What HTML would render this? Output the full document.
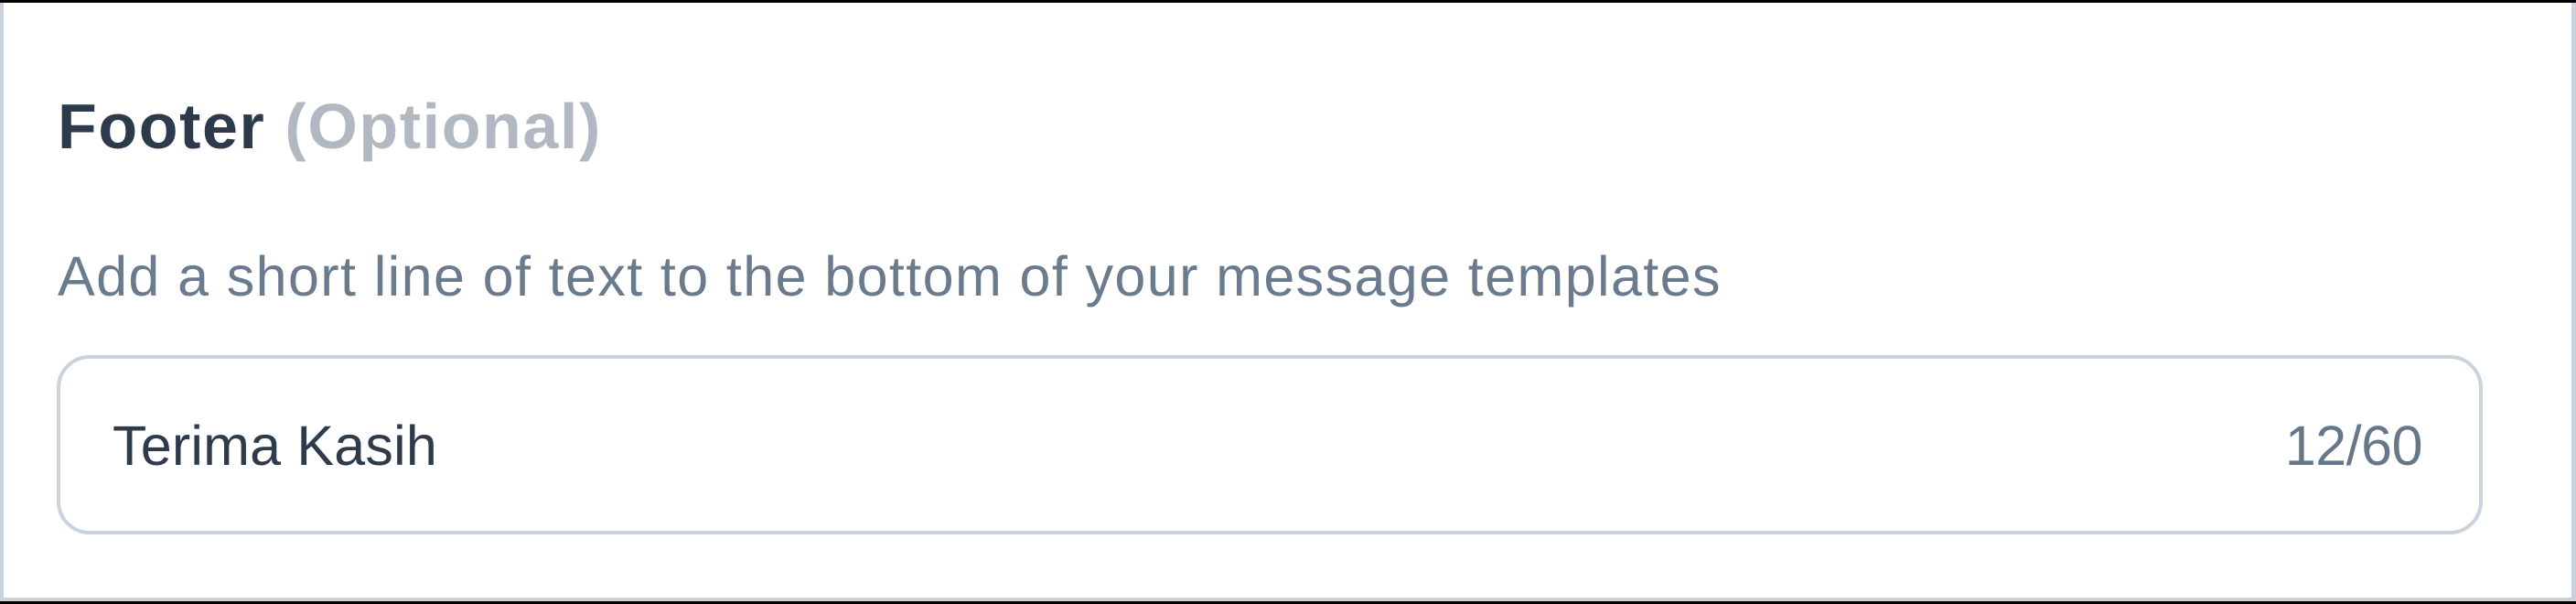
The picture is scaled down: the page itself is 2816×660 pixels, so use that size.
<!DOCTYPE html>
<html><head><meta charset="utf-8"><style>
html,body{margin:0;padding:0;background:#000;width:2816px;height:660px;overflow:hidden}
.card{position:absolute;left:0;top:3px;width:2807px;height:650px;background:#fff;border:4px solid #c9d3de;border-top:0;border-right-width:5px}
.t{position:absolute;font-family:"Liberation Sans",sans-serif;white-space:nowrap;line-height:1}
.h{left:63px;top:103px;font-size:70px;font-weight:bold;color:#2d3a4b;letter-spacing:1.6px}
.h span{color:#b1b8c1}
.d{left:63px;top:272px;font-size:61px;color:#6a7b8e;letter-spacing:1.4px}
.inp{position:absolute;left:62px;top:388px;width:2644px;height:188px;border:4px solid #c9d3de;border-radius:36px;background:#fff}
.v{left:123px;top:457px;font-size:61px;color:#2e3b4b;letter-spacing:0.2px}
.c{right:168px;top:457px;font-size:61px;color:#66778a;letter-spacing:-0.5px}
</style></head><body>
<div class="card"></div>
<div class="t h">Footer <span>(Optional)</span></div>
<div class="t d">Add a short line of text to the bottom of your message templates</div>
<div class="inp"></div>
<div class="t v">Terima Kasih</div>
<div class="t c">12/60</div>
</body></html>
